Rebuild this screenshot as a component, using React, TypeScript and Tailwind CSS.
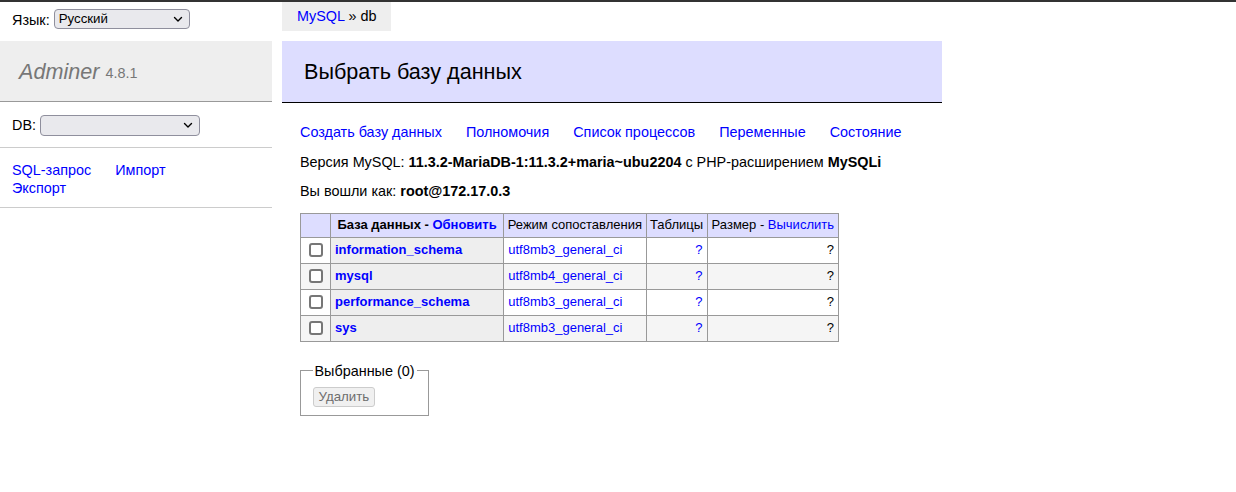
import React from "react";

const font = { fontFamily: '"Liberation Sans", Arial, sans-serif' };

function Chevron() {
  return (
    <svg width="10" height="7" viewBox="0 0 10 7" className="shrink-0">
      <path d="M1.5 1.5 L5 5 L8.5 1.5" fill="none" stroke="#000" strokeWidth="1.4" strokeLinecap="round" strokeLinejoin="round" />
    </svg>
  );
}

function FakeSelect({ w, h, text }: { w: string; h: string; text?: string }) {
  return (
    <div
      className={`${w} ${h} flex items-center justify-between rounded-[4px] border border-[#8f8f9d] bg-[#e9e9ed] pl-[4px] pr-[6px] text-[13.3px] text-black`}
    >
      <span>{text ?? ""}</span>
      <Chevron />
    </div>
  );
}

const rows = [
  { name: "information_schema", coll: "utf8mb3_general_ci" },
  { name: "mysql", coll: "utf8mb4_general_ci" },
  { name: "performance_schema", coll: "utf8mb3_general_ci" },
  { name: "sys", coll: "utf8mb3_general_ci" },
];

export default function App() {
  return (
    <div className="min-h-[492px] w-[1236px] bg-white text-[14.4px] leading-[18px] text-black" style={font}>
      <div className="h-[2px] w-full bg-[#333]" />
      <div className="flex">
        {/* Sidebar */}
        <div className="w-[272px] shrink-0">
          <div className="flex h-[39px] items-start gap-[4px] pl-[12px] pt-[7px]">
            <span className="leading-[22px]">Язык:</span>
            <FakeSelect w="w-[136px]" h="h-[20px]" text="Русский" />
          </div>
          <div className="flex h-[61px] items-center border-b border-[#999] bg-[#eee] pl-[19px] text-[#777]">
            <span className="text-[21.6px] italic leading-[27px]">Adminer</span>
            <span className="ml-[6px] mt-[4px] text-[14.4px]">4.8.1</span>
          </div>
          <div className="flex h-[46px] items-start gap-[4px] border-b border-[#ccc] pl-[12px] pt-[13px]">
            <span className="leading-[21px]">DB:</span>
            <FakeSelect w="w-[160px]" h="h-[21px]" />
          </div>
          <div className="h-[60px] border-b border-[#ccc] pl-[12px] pt-[13px]">
            <div className="flex gap-[24px]">
              <a className="text-[#00f]">SQL-запрос</a>
              <a className="text-[#00f]">Импорт</a>
            </div>
            <div>
              <a className="text-[#00f]">Экспорт</a>
            </div>
          </div>
        </div>

        {/* Content */}
        <div className="ml-[10px] w-[660px]">
          <div className="inline-block h-[29px] bg-[#eee] px-[15px] leading-[28px]">
            <a className="text-[#00f]">MySQL</a> » db
          </div>
          <h2 className="mt-[10px] flex h-[62px] items-center border-b border-black bg-[#ddf] pl-[22px] text-[21.6px] font-normal leading-[27px]">
            Выбрать базу данных
          </h2>
          <div className="pl-[18px]">
            <div className="mt-[20px] flex gap-[24px]">
              <a className="text-[#00f]">Создать базу данных</a>
              <a className="text-[#00f]">Полномочия</a>
              <a className="text-[#00f]">Список процессов</a>
              <a className="text-[#00f]">Переменные</a>
              <a className="text-[#00f]">Состояние</a>
            </div>
            <p className="mt-[11.5px]">
              Версия MySQL: <b>11.3.2-MariaDB-1:11.3.2+maria~ubu2204</b> с PHP-расширением <b>MySQLi</b>
            </p>
            <p className="mt-[11.5px]">
              Вы вошли как: <b>root@172.17.0.3</b>
            </p>
            <table className="mt-[12.5px] border-collapse whitespace-nowrap text-[13px] leading-[18px]">
              <thead>
                <tr className="bg-[#ddf]">
                  <td className="w-[30px] border border-[#999] px-[3px] py-[2.5px]"></td>
                  <th className="border border-[#999] px-[6.5px] py-[2.5px] text-center font-bold">
                    База данных - <a className="text-[#00f]">Обновить</a>
                  </th>
                  <td className="border border-[#999] px-[3.5px] py-[2.5px]">Режим сопоставления</td>
                  <td className="border border-[#999] px-[3.5px] py-[2.5px]">Таблицы</td>
                  <td className="border border-[#999] px-[4px] py-[2.5px]">
                    Размер - <a className="text-[#00f]">Вычислить</a>
                  </td>
                </tr>
              </thead>
              <tbody>
                {rows.map((r, i) => (
                  <tr key={r.name} className={i % 2 === 1 ? "bg-[#f5f5f5]" : "bg-white"}>
                    <td className="h-[26px] border border-[#999] px-[3px] py-0">
                      <div className="flex items-center pl-[5px]">
                        <span className="block h-[14px] w-[14px] rounded-[3px] border-2 border-[#777] bg-white" />
                      </div>
                    </td>
                    <th className="border border-[#999] bg-[#eee] px-[4px] py-0 text-left font-bold">
                      <a className="text-[#00f]">{r.name}</a>
                    </th>
                    <td className="border border-[#999] px-[4px] py-0">
                      <a className="text-[#00f]">{r.coll}</a>
                    </td>
                    <td className="border border-[#999] px-[4px] py-0 text-right">
                      <a className="text-[#00f]">?</a>
                    </td>
                    <td className="border border-[#999] px-[4px] py-0 text-right">?</td>
                  </tr>
                ))}
              </tbody>
            </table>
            <fieldset className="mt-[20px] inline-block border border-[#999] px-[11.5px] pb-[8px] pt-[7px]">
              <legend className="px-[2px]">Выбранные (0)</legend>
              <button
                disabled
                className="h-[20px] rounded-[3px] border border-[#ccc] bg-[#f0f0f0] px-[5px] text-[13.3px] leading-[18px] text-[#6d6d6d]"
              >
                Удалить
              </button>
            </fieldset>
          </div>
        </div>
      </div>
    </div>
  );
}
